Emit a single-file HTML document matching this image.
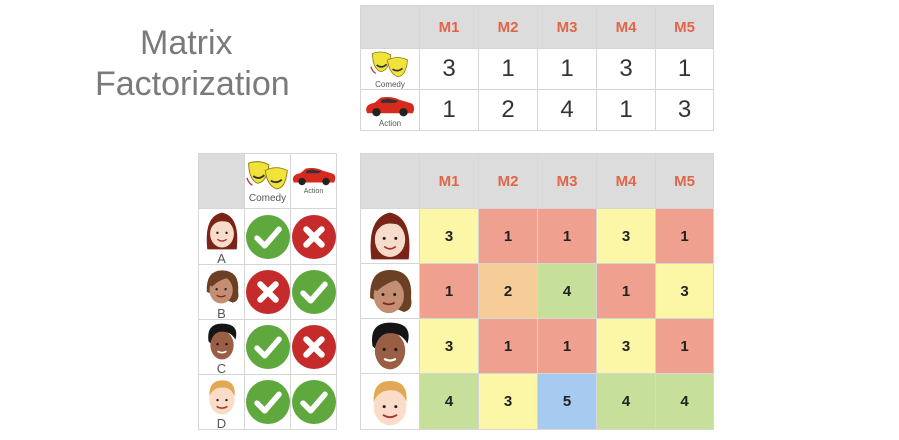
<!DOCTYPE html>
<html><head><meta charset="utf-8"><style>
body{margin:0;width:899px;height:440px;background:#fff;position:relative;overflow:hidden;font-family:"Liberation Sans",Arial,sans-serif}
.c{position:absolute;box-sizing:border-box;border:1px solid #d6d6d6;display:flex;align-items:center;justify-content:center}
.h{background:#dcdcdc;color:#e0664a;font-weight:bold;font-size:15px}
.n{font-size:24px;color:#333}
.b{font-weight:bold;font-size:15px;color:#222}
.y{background:#fbf7a6}.r{background:#f0a08e}.o{background:#f6cc98}.g{background:#c6df9a}.u{background:#a7cbf0}
.t{position:absolute;color:#7a7a7a;font-size:34px;line-height:1}
svg{display:block}
</style></head><body>
<svg width="0" height="0" style="position:absolute">
<defs>
<symbol id="ok" viewBox="0 0 40 40"><circle cx="20" cy="20" r="20" fill="#5ea83e"/><path d="M10 21 L17 28 L30 13" stroke="#fff" stroke-width="5" fill="none" stroke-linecap="round" stroke-linejoin="round"/></symbol>
<symbol id="no" viewBox="0 0 40 40"><circle cx="20" cy="20" r="20" fill="#c62b2b"/><path d="M13 13 L27 27 M27 13 L13 27" stroke="#fff" stroke-width="5.5" stroke-linecap="round"/></symbol>
<symbol id="fa" viewBox="0 0 40 48"><path d="M4 44 Q0 8 20 4 Q40 8 36 44 Z" fill="#7a2418"/><ellipse cx="20" cy="27" rx="13" ry="15" fill="#f7dccb"/><path d="M7 24 Q12 8 32 16 Q24 8 12 12 Z" fill="#7a2418"/><circle cx="15" cy="26" r="1.3" fill="#222"/><circle cx="25" cy="26" r="1.3" fill="#222"/><path d="M15 33 Q20 37 25 33" stroke="#a33" stroke-width="1.5" fill="none"/></symbol>
<symbol id="fb" viewBox="0 0 40 48"><path d="M3 30 Q2 6 20 6 Q40 6 38 30 Q40 40 32 42 Z" fill="#6b4024"/><ellipse cx="19" cy="28" rx="13" ry="15" fill="#c48e72"/><path d="M5 22 Q12 6 32 14 Q20 14 9 24 Z" fill="#6b4024"/><circle cx="14" cy="27" r="1.3" fill="#222"/><circle cx="24" cy="27" r="1.3" fill="#222"/><path d="M14 34 Q19 37 24 34" stroke="#822" stroke-width="1.5" fill="none"/></symbol>
<symbol id="fc" viewBox="0 0 40 48"><ellipse cx="20" cy="28" rx="13" ry="16" fill="#9a5e44"/><path d="M5 24 Q2 4 20 4 Q40 4 35 22 Q30 13 20 13 Q10 13 7 26 Z" fill="#151515"/><circle cx="15" cy="27" r="1.3" fill="#111"/><circle cx="25" cy="27" r="1.3" fill="#111"/><path d="M15 35 Q20 38 25 35" stroke="#fff" stroke-width="1.8" fill="none"/></symbol>
<symbol id="fd" viewBox="0 0 40 48"><ellipse cx="20" cy="28" rx="14" ry="16" fill="#fadcc8"/><path d="M6 24 Q5 6 20 6 Q36 6 34 24 Q30 13 20 14 Q10 14 6 24 Z" fill="#e2a954"/><circle cx="15" cy="28" r="1.3" fill="#222"/><circle cx="25" cy="28" r="1.3" fill="#222"/><path d="M14 35 Q20 39 26 35" stroke="#a33" stroke-width="1.6" fill="none"/></symbol>
<symbol id="mask" viewBox="0 0 50 36"><path d="M4 4 Q16 0 26 6 Q24 24 14 26 Q4 22 4 4Z" fill="#f2e33a" stroke="#8a7a10" stroke-width="1"/><path d="M22 12 Q34 6 46 12 Q44 32 34 32 Q24 28 22 12Z" fill="#f2e33a" stroke="#8a7a10" stroke-width="1"/><path d="M9 18 Q15 23 21 17" stroke="#333" stroke-width="2" fill="none"/><path d="M28 23 Q34 27 40 22" stroke="#333" stroke-width="2" fill="none"/><path d="M2 20 Q4 26 8 28" stroke="#b33" stroke-width="1.5" fill="none"/></symbol>
<symbol id="car" viewBox="0 0 50 24"><path d="M2 16 Q2 10 10 9 L16 4 Q26 2 34 6 L44 9 Q49 10 48 16 L47 19 L3 19 Z" fill="#d62a1e"/><path d="M17 6 L23 5 L33 7 L30 9 L16 9Z" fill="#333"/><circle cx="12" cy="18" r="4" fill="#222"/><circle cx="38" cy="18" r="4" fill="#222"/></symbol>
</defs></svg>

<div class="t" style="left:140px;top:26px">Matrix</div>
<div class="t" style="left:95px;top:67px">Factorization</div>

<div class="c h" style="left:360px;top:5px;width:60px;height:44px"></div>
<div class="c h" style="left:419px;top:5px;width:60px;height:44px">M1</div>
<div class="c h" style="left:478px;top:5px;width:60px;height:44px">M2</div>
<div class="c h" style="left:537px;top:5px;width:60px;height:44px">M3</div>
<div class="c h" style="left:596px;top:5px;width:60px;height:44px">M4</div>
<div class="c h" style="left:655px;top:5px;width:59px;height:44px">M5</div>

<div class="c" style="left:360px;top:48px;width:60px;height:42px;flex-direction:column"><svg width="44" height="30"><use href="#mask"/></svg><span style="font-size:8px;color:#555">Comedy</span></div>
<div class="c n" style="left:419px;top:48px;width:60px;height:42px">3</div>
<div class="c n" style="left:478px;top:48px;width:60px;height:42px">1</div>
<div class="c n" style="left:537px;top:48px;width:60px;height:42px">1</div>
<div class="c n" style="left:596px;top:48px;width:60px;height:42px">3</div>
<div class="c n" style="left:655px;top:48px;width:59px;height:42px">1</div>

<div class="c" style="left:360px;top:89px;width:60px;height:42px;flex-direction:column"><svg width="52" height="26"><use href="#car"/></svg><span style="font-size:8px;color:#555">Action</span></div>
<div class="c n" style="left:419px;top:89px;width:60px;height:42px">1</div>
<div class="c n" style="left:478px;top:89px;width:60px;height:42px">2</div>
<div class="c n" style="left:537px;top:89px;width:60px;height:42px">4</div>
<div class="c n" style="left:596px;top:89px;width:60px;height:42px">1</div>
<div class="c n" style="left:655px;top:89px;width:59px;height:42px">3</div>

<div class="c h" style="left:198px;top:153px;width:47px;height:56px"></div>
<div class="c" style="left:244px;top:153px;width:47px;height:56px;flex-direction:column"><svg width="46" height="34"><use href="#mask"/></svg><span style="font-size:10px;color:#555">Comedy</span></div>
<div class="c" style="left:290px;top:153px;width:47px;height:56px;flex-direction:column;justify-content:flex-start;padding-top:10px"><svg width="46" height="24"><use href="#car"/></svg><span style="font-size:7px;color:#555">Action</span></div>

<div class="c" style="left:198px;top:208px;width:47px;height:57px;flex-direction:column"><svg width="38" height="44"><use href="#fa"/></svg><span style="font-size:13px;color:#555;line-height:11px">A</span></div>
<div class="c" style="left:244px;top:208px;width:47px;height:57px"><svg width="44" height="44"><use href="#ok"/></svg></div>
<div class="c" style="left:290px;top:208px;width:47px;height:57px"><svg width="44" height="44"><use href="#no"/></svg></div>

<div class="c" style="left:198px;top:264px;width:47px;height:56px;flex-direction:column"><svg width="38" height="44"><use href="#fb"/></svg><span style="font-size:13px;color:#555;line-height:11px">B</span></div>
<div class="c" style="left:244px;top:264px;width:47px;height:56px"><svg width="44" height="44"><use href="#no"/></svg></div>
<div class="c" style="left:290px;top:264px;width:47px;height:56px"><svg width="44" height="44"><use href="#ok"/></svg></div>

<div class="c" style="left:198px;top:319px;width:47px;height:56px;flex-direction:column"><svg width="38" height="44"><use href="#fc"/></svg><span style="font-size:13px;color:#555;line-height:11px">C</span></div>
<div class="c" style="left:244px;top:319px;width:47px;height:56px"><svg width="44" height="44"><use href="#ok"/></svg></div>
<div class="c" style="left:290px;top:319px;width:47px;height:56px"><svg width="44" height="44"><use href="#no"/></svg></div>

<div class="c" style="left:198px;top:374px;width:47px;height:56px;flex-direction:column"><svg width="38" height="44"><use href="#fd"/></svg><span style="font-size:13px;color:#555;line-height:11px">D</span></div>
<div class="c" style="left:244px;top:374px;width:47px;height:56px"><svg width="44" height="44"><use href="#ok"/></svg></div>
<div class="c" style="left:290px;top:374px;width:47px;height:56px"><svg width="44" height="44"><use href="#ok"/></svg></div>

<div class="c h" style="left:360px;top:153px;width:60px;height:56px"></div>
<div class="c h" style="left:419px;top:153px;width:60px;height:56px">M1</div>
<div class="c h" style="left:478px;top:153px;width:60px;height:56px">M2</div>
<div class="c h" style="left:537px;top:153px;width:60px;height:56px">M3</div>
<div class="c h" style="left:596px;top:153px;width:60px;height:56px">M4</div>
<div class="c h" style="left:655px;top:153px;width:59px;height:56px">M5</div>

<div class="c" style="left:360px;top:208px;width:60px;height:56px"><svg width="48" height="56"><use href="#fa"/></svg></div>
<div class="c b y" style="left:419px;top:208px;width:60px;height:56px">3</div>
<div class="c b r" style="left:478px;top:208px;width:60px;height:56px">1</div>
<div class="c b r" style="left:537px;top:208px;width:60px;height:56px">1</div>
<div class="c b y" style="left:596px;top:208px;width:60px;height:56px">3</div>
<div class="c b r" style="left:655px;top:208px;width:59px;height:56px">1</div>

<div class="c" style="left:360px;top:263px;width:60px;height:56px"><svg width="48" height="56"><use href="#fb"/></svg></div>
<div class="c b r" style="left:419px;top:263px;width:60px;height:56px">1</div>
<div class="c b o" style="left:478px;top:263px;width:60px;height:56px">2</div>
<div class="c b g" style="left:537px;top:263px;width:60px;height:56px">4</div>
<div class="c b r" style="left:596px;top:263px;width:60px;height:56px">1</div>
<div class="c b y" style="left:655px;top:263px;width:59px;height:56px">3</div>

<div class="c" style="left:360px;top:318px;width:60px;height:56px"><svg width="48" height="56"><use href="#fc"/></svg></div>
<div class="c b y" style="left:419px;top:318px;width:60px;height:56px">3</div>
<div class="c b r" style="left:478px;top:318px;width:60px;height:56px">1</div>
<div class="c b r" style="left:537px;top:318px;width:60px;height:56px">1</div>
<div class="c b y" style="left:596px;top:318px;width:60px;height:56px">3</div>
<div class="c b r" style="left:655px;top:318px;width:59px;height:56px">1</div>

<div class="c" style="left:360px;top:373px;width:60px;height:57px"><svg width="48" height="56"><use href="#fd"/></svg></div>
<div class="c b g" style="left:419px;top:373px;width:60px;height:57px">4</div>
<div class="c b y" style="left:478px;top:373px;width:60px;height:57px">3</div>
<div class="c b u" style="left:537px;top:373px;width:60px;height:57px">5</div>
<div class="c b g" style="left:596px;top:373px;width:60px;height:57px">4</div>
<div class="c b g" style="left:655px;top:373px;width:59px;height:57px">4</div>
</body></html>
